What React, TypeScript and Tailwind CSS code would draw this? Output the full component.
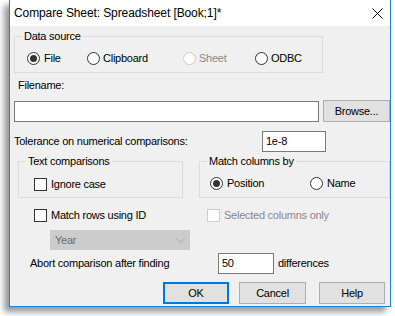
import React from 'react'

function Radio({ checked = false, disabled = false }: { checked?: boolean; disabled?: boolean }) {
  return (
    <span
      className={`flex h-[13px] w-[13px] shrink-0 items-center justify-center rounded-full border bg-white ${
        disabled ? 'border-[#cccccc]' : 'border-[#333333]'
      }`}
    >
      {checked && <span className="h-[7px] w-[7px] rounded-full bg-[#333333]" />}
    </span>
  )
}

function Check({ disabled = false }: { disabled?: boolean }) {
  return (
    <span
      className={`block h-[13px] w-[13px] shrink-0 border bg-white ${
        disabled ? 'border-[#cccccc]' : 'border-[#333333]'
      }`}
    />
  )
}

function Group({ label, className, children }: { label: string; className: string; children: React.ReactNode }) {
  return (
    <div className={`relative border border-[#dcdcdc] ${className}`}>
      <span className="absolute -top-[8px] left-[7px] bg-[#f0f0f0] px-[2px] leading-[15px]">{label}</span>
      {children}
    </div>
  )
}

function Button({ children, primary = false, className = '' }: { children: React.ReactNode; primary?: boolean; className?: string }) {
  return (
    <div
      className={`flex h-[22px] items-center justify-center bg-[#e1e1e1] ${
        primary ? 'border-2 border-[#0078d7]' : 'border border-[#adadad]'
      } ${className}`}
    >
      {children}
    </div>
  )
}

export default function App() {
  return (
    <div className="h-[316px] w-[395px] overflow-hidden bg-white text-[11px] leading-[15px] tracking-[-0.25px] text-black font-[family-name:'Liberation_Sans',Arial,sans-serif]">
      <div className="ml-[9px] flex h-[307px] w-[382px] flex-col border-x border-b border-[#1883d7] bg-[#f0f0f0] shadow-[-5px_5px_6px_rgba(0,0,0,0.4)]">
        {/* Title bar */}
        <div className="flex h-[26px] shrink-0 items-center justify-between bg-white pl-[4px] pr-[5px] text-[12px] tracking-[-0.1px]">
          <span>Compare Sheet: Spreadsheet [Book;1]*</span>
          <svg width="11" height="11" viewBox="0 0 11 11" className="mr-[2px]">
            <path d="M0.5 0.5 L10.5 10.5 M10.5 0.5 L0.5 10.5" stroke="#000" strokeWidth="1" />
          </svg>
        </div>

        {/* Data source */}
        <Group label="Data source" className="ml-[4px] mt-[10px] h-[37px] w-[309px]">
          <div className="mt-[14px] flex items-center">
            <div className="ml-[12px] flex w-[60px] items-center gap-[4px]">
              <Radio checked />
              <span>File</span>
            </div>
            <div className="flex w-[96px] items-center gap-[3px]">
              <Radio />
              <span>Clipboard</span>
            </div>
            <div className="flex w-[72px] items-center gap-[3px] text-[#8a8a8a]">
              <Radio disabled />
              <span>Sheet</span>
            </div>
            <div className="flex items-center gap-[3px]">
              <Radio />
              <span>ODBC</span>
            </div>
          </div>
        </Group>

        {/* Filename */}
        <div className="ml-[8px] mt-[5px]">Filename:</div>
        <div className="ml-[4px] mt-[7px] flex items-center">
          <div className="h-[21px] w-[305px] border border-[#7a7a7a] bg-white" />
          <Button className="ml-[4px] w-[67px]">Browse...</Button>
        </div>

        {/* Tolerance */}
        <div className="ml-[4px] mt-[9px] flex items-center">
          <span className="w-[248px]">Tolerance on numerical comparisons:</span>
          <div className="flex h-[21px] w-[64px] items-center border border-[#7a7a7a] bg-white pl-[3px]">1e-8</div>
        </div>

        {/* Comparison groups */}
        <div className="ml-[8px] mt-[9px] flex">
          <Group label="Text comparisons" className="h-[37px] w-[165px]">
            <div className="ml-[15px] mt-[15px] flex items-center gap-[4px]">
              <Check />
              <span>Ignore case</span>
            </div>
          </Group>
          <Group label="Match columns by" className="ml-[16px] h-[37px] w-[191px]">
            <div className="mt-[14px] flex items-center">
              <div className="ml-[10px] flex w-[100px] items-center gap-[4px]">
                <Radio checked />
                <span>Position</span>
              </div>
              <div className="flex items-center gap-[4px]">
                <Radio />
                <span>Name</span>
              </div>
            </div>
          </Group>
        </div>

        {/* Match rows */}
        <div className="ml-[24px] mt-[10px] flex items-center">
          <div className="flex w-[173px] items-center gap-[4px]">
            <Check />
            <span>Match rows using ID</span>
          </div>
          <div className="flex items-center gap-[4px] text-[#8a8a8a]">
            <Check disabled />
            <span>Selected columns only</span>
          </div>
        </div>
        <div className="ml-[40px] mt-[7px] flex h-[20px] w-[140px] items-center justify-between border border-[#cccccc] bg-[#cccccc] pl-[4px] pr-[4px] text-[#6d6d6d]">
          <span>Year</span>
          <svg width="9" height="5" viewBox="0 0 9 5">
            <path d="M0.5 0.5 L4.5 4.5 L8.5 0.5" fill="none" stroke="#a8a8a8" strokeWidth="1" />
          </svg>
        </div>

        {/* Abort */}
        <div className="ml-[20px] mt-[3px] flex items-center">
          <span className="w-[188px]">Abort comparison after finding</span>
          <div className="flex h-[21px] w-[56px] items-center border border-[#7a7a7a] bg-white pl-[3px]">50</div>
          <span className="ml-[4px]">differences</span>
        </div>

        {/* Buttons */}
        <div className="ml-[153px] mt-[8px] flex">
          <Button primary className="w-[66px]">OK</Button>
          <Button className="ml-[10px] w-[67px]">Cancel</Button>
          <Button className="ml-[13px] w-[66px]">Help</Button>
        </div>
      </div>
    </div>
  )
}
